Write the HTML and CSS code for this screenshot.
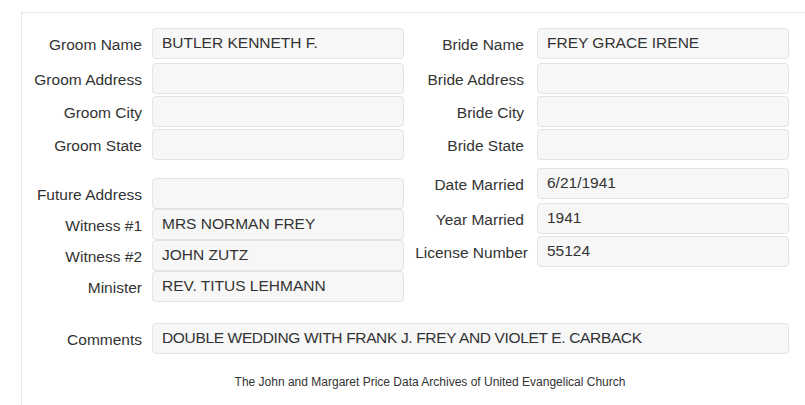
FILE: index.html
```html
<!DOCTYPE html>
<html>
<head>
    <meta charset="UTF-8">
    <title>Marriage Record</title>
    <link rel="stylesheet" href="styles.css">
</head>
<body>
    <div class="record">
        <div class="sheet">
            <div class="group">
                <div class="field field-lead"><label>Groom Name</label><div class="value">BUTLER KENNETH F.</div></div>
                <div class="field"><label>Groom Address</label><div class="value"></div></div>
                <div class="field"><label>Groom City</label><div class="value"></div></div>
                <div class="field"><label>Groom State</label><div class="value"></div></div>
            </div>
            <div class="group right">
                <div class="field field-lead"><label>Bride Name</label><div class="value">FREY GRACE IRENE</div></div>
                <div class="field"><label>Bride Address</label><div class="value"></div></div>
                <div class="field"><label>Bride City</label><div class="value"></div></div>
                <div class="field"><label>Bride State</label><div class="value"></div></div>
            </div>

            <div class="group tight lower-left">
                <div class="field"><label>Future Address</label><div class="value"></div></div>
                <div class="field"><label>Witness #1</label><div class="value">MRS NORMAN FREY</div></div>
                <div class="field"><label>Witness #2</label><div class="value">JOHN ZUTZ</div></div>
                <div class="field"><label>Minister</label><div class="value">REV. TITUS LEHMANN</div></div>
            </div>
            <div class="group right lower-right">
                <div class="field field-lead"><label>Date Married</label><div class="value">6/21/1941</div></div>
                <div class="field"><label>Year Married</label><div class="value">1941</div></div>
                <div class="field"><label class="wide">License Number</label><div class="value">55124</div></div>
            </div>

            <div class="field comments"><label>Comments</label><div class="value">DOUBLE WEDDING WITH FRANK J. FREY AND VIOLET E. CARBACK</div></div>
        </div>

        <p class="footer">The John and Margaret Price Data Archives of United Evangelical Church</p>
    </div>
</body>
</html>
```

FILE: styles.css
```css
body {
    margin: 0;
    font-family: "Liberation Sans", Arial, sans-serif;
    color: #333;
    background: #fff;
    overflow: hidden;
}
.record {
    box-sizing: border-box;
    margin: 12px 0 0 21px;
    height: calc(100vh - 12px);
    padding-top: 15px;
    border-top: 1px solid #e6e6e6;
    border-left: 1px solid #e6e6e6;
}
.sheet {
    display: grid;
    grid-template-columns: 382px 385px;
}
.group {
    display: flex;
    flex-direction: column;
    gap: 2px;
}
.group.tight {
    gap: 0;
}
.lower-left {
    margin-top: 18px;
}
.lower-right {
    margin-top: 8px;
}
.field {
    display: grid;
    grid-template-columns: 120px 252px;
    column-gap: 10px;
    align-items: center;
}
.field-lead {
    margin-bottom: 2px;
}
.right .field {
    column-gap: 13px;
}
.field label {
    text-align: right;
    font-size: 15.5px;
    white-space: nowrap;
    padding-top: 3px;
}
.field label.wide {
    margin-right: -4px;
}
.value {
    height: 29px;
    line-height: 28px;
    padding: 0 9px;
    font-size: 15.5px;
    background: #f7f7f7;
    border: 1px solid #e4e4e4;
    border-radius: 4px;
    white-space: nowrap;
    overflow: hidden;
}
.comments {
    grid-column: 1 / 3;
    grid-template-columns: 120px 637px;
    margin-top: 21px;
}
.comments .value {
    box-sizing: border-box;
    height: 31px;
    letter-spacing: -0.35px;
}
.footer {
    margin: 21px 0 0;
    padding-left: 32px;
    width: 752px;
    text-align: center;
    font-size: 12px;
}
```
